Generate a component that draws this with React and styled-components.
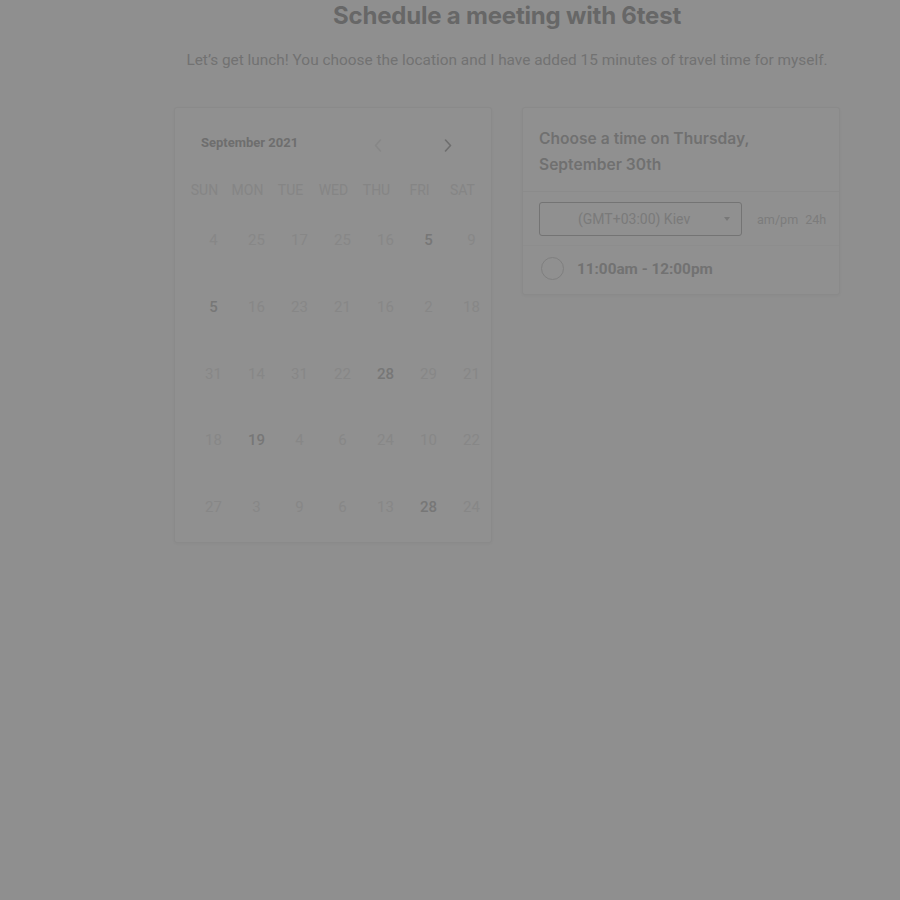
import React from "react";
import styled, { createGlobalStyle } from "styled-components";

const Global = createGlobalStyle`
  html, body { margin: 0; padding: 0; background: #8f8f8f; }
  body { font-family: Roboto, "Liberation Sans", sans-serif; }
  * { box-sizing: border-box; }
`;

const Page = styled.div`
  width: 900px;
  min-height: 900px;
  background: #8f8f8f;
  display: flex;
  flex-direction: column;
  align-items: center;
  padding-left: 114px;
`;

const Title = styled.h1`
  margin: 0;
  font-family: Inter, Roboto, sans-serif;
  font-size: 24px;
  line-height: 32px;
  font-weight: 700;
  color: #676767;
  letter-spacing: -0.2px;
`;

const Subtitle = styled.p`
  margin: 18px 0 0;
  font-size: 15.4px;
  line-height: 20px;
  color: #727272;
  white-space: nowrap;
`;

const Columns = styled.div`
  display: flex;
  gap: 30px;
  margin-top: 37px;
  align-items: flex-start;
`;

const Card = styled.div`
  width: 318px;
  background: #909090;
  border: 1px solid #8a8a8a;
  border-radius: 3px;
  box-shadow: 0 1px 3px rgba(0, 0, 0, 0.03);
`;

const CalendarCard = styled(Card)`
  height: 436px;
  padding: 14px 8px 0;
`;

const CalHeader = styled.div`
  display: flex;
  align-items: center;
  height: 40px;
  padding-left: 18px;
`;

const Month = styled.div`
  font-size: 13px;
  font-weight: 700;
  color: #6e6e6e;
  flex: 1;
`;

const NavButton = styled.button`
  background: none;
  border: 0;
  padding: 0;
  width: 14px;
  height: 14px;
  margin-top: 7px;
  display: flex;
  align-items: center;
  justify-content: center;
  color: ${(p) => (p.$active ? "#6e6e6e" : "#878787")};
  margin-right: ${(p) => p.$mr || 0}px;
`;

const Grid = styled.div`
  display: grid;
  grid-template-columns: repeat(7, 43px);
`;

const WeekRow = styled(Grid)`
  margin-top: 18px;
  height: 20px;
  align-items: center;
`;

const WeekDay = styled.div`
  text-align: center;
  font-size: 14px;
  color: #858585;
  line-height: 20px;
`;

const DaysGrid = styled(Grid)`
  margin-top: 7px;
  grid-auto-rows: 66.7px;
  align-items: center;
`;

const Day = styled.div`
  text-align: center;
  padding-left: 18px;
  font-size: 15px;
  line-height: 20px;
  font-weight: ${(p) => (p.$on ? 500 : 400)};
  color: ${(p) => (p.$on ? "#777777" : "#878787")};
`;

const TimeCard = styled(Card)``;

const TimeHeader = styled.div`
  padding: 18px 16px 13px;
  font-family: Inter, Roboto, sans-serif;
  font-size: 15.6px;
  line-height: 26px;
  font-weight: 600;
  color: #707070;
  border-bottom: 1px solid #8b8b8b;
`;

const ZoneRow = styled.div`
  display: flex;
  align-items: center;
  padding: 10px 16px 9px;
  border-bottom: 1px solid #8d8d8d;
`;

const Select = styled.div`
  flex-shrink: 0;
  width: 203px;
  height: 34px;
  border: 1px solid #747474;
  border-radius: 3px;
  display: flex;
  align-items: center;
  padding-left: 38px;
  padding-right: 11px;
  font-size: 14px;
  color: #7a7a7a;
`;

const SelectText = styled.span`
  flex: 1;
`;

const Caret = styled.span`
  width: 0;
  height: 0;
  border-left: 3.5px solid transparent;
  border-right: 3.5px solid transparent;
  border-top: 4px solid #787878;
`;

const Formats = styled.div`
  display: flex;
  gap: 7px;
  margin-left: 15px;
  font-size: 12.6px;
  color: #7c7c7c;
`;

const Slot = styled.label`
  display: flex;
  align-items: center;
  gap: 13px;
  padding: 11px 18px 14px;
  font-size: 15.3px;
  font-weight: 700;
  color: #727272;
`;

const Radio = styled.span`
  width: 23px;
  height: 23px;
  border-radius: 50%;
  border: 1.5px solid #7f7f7f;
`;

const rows = [
  [4, 25, 17, 25, 16, 5, 9],
  [5, 16, 23, 21, 16, 2, 18],
  [31, 14, 31, 22, 28, 29, 21],
  [18, 19, 4, 6, 24, 10, 22],
  [27, 3, 9, 6, 13, 28, 24],
];
const active = { "0-5": 1, "1-0": 1, "2-4": 1, "3-1": 1, "4-5": 1 };
const weekdays = ["SUN", "MON", "TUE", "WED", "THU", "FRI", "SAT"];

const Chevron = ({ dir }) => (
  <svg width="8" height="13" viewBox="0 0 8 13" fill="none">
    <path
      d={dir === "left" ? "M6.5 1 L1.5 6.5 L6.5 12" : "M1.5 1 L6.5 6.5 L1.5 12"}
      stroke="currentColor"
      strokeWidth="1.6"
      strokeLinecap="round"
      strokeLinejoin="round"
    />
  </svg>
);

export default function App() {
  return (
    <>
      <Global />
      <Page>
        <Title>Schedule a meeting with 6test</Title>
        <Subtitle>
          Let’s get lunch! You choose the location and I have added 15 minutes of travel time for myself.
        </Subtitle>
        <Columns>
          <CalendarCard>
            <CalHeader>
              <Month>September 2021</Month>
              <NavButton $mr={56}>
                <Chevron dir="left" />
              </NavButton>
              <NavButton $active $mr={28}>
                <Chevron dir="right" />
              </NavButton>
            </CalHeader>
            <WeekRow>
              {weekdays.map((d) => (
                <WeekDay key={d}>{d}</WeekDay>
              ))}
            </WeekRow>
            <DaysGrid>
              {rows.map((r, ri) =>
                r.map((n, ci) => (
                  <Day key={`${ri}-${ci}`} $on={active[`${ri}-${ci}`]}>
                    {n}
                  </Day>
                ))
              )}
            </DaysGrid>
          </CalendarCard>
          <TimeCard>
            <TimeHeader>
              Choose a time on Thursday,
              <br />
              September 30th
            </TimeHeader>
            <ZoneRow>
              <Select>
                <SelectText>(GMT+03:00) Kiev</SelectText>
                <Caret />
              </Select>
              <Formats>
                <span>am/pm</span>
                <span>24h</span>
              </Formats>
            </ZoneRow>
            <Slot>
              <Radio />
              11:00am - 12:00pm
            </Slot>
          </TimeCard>
        </Columns>
      </Page>
    </>
  );
}
